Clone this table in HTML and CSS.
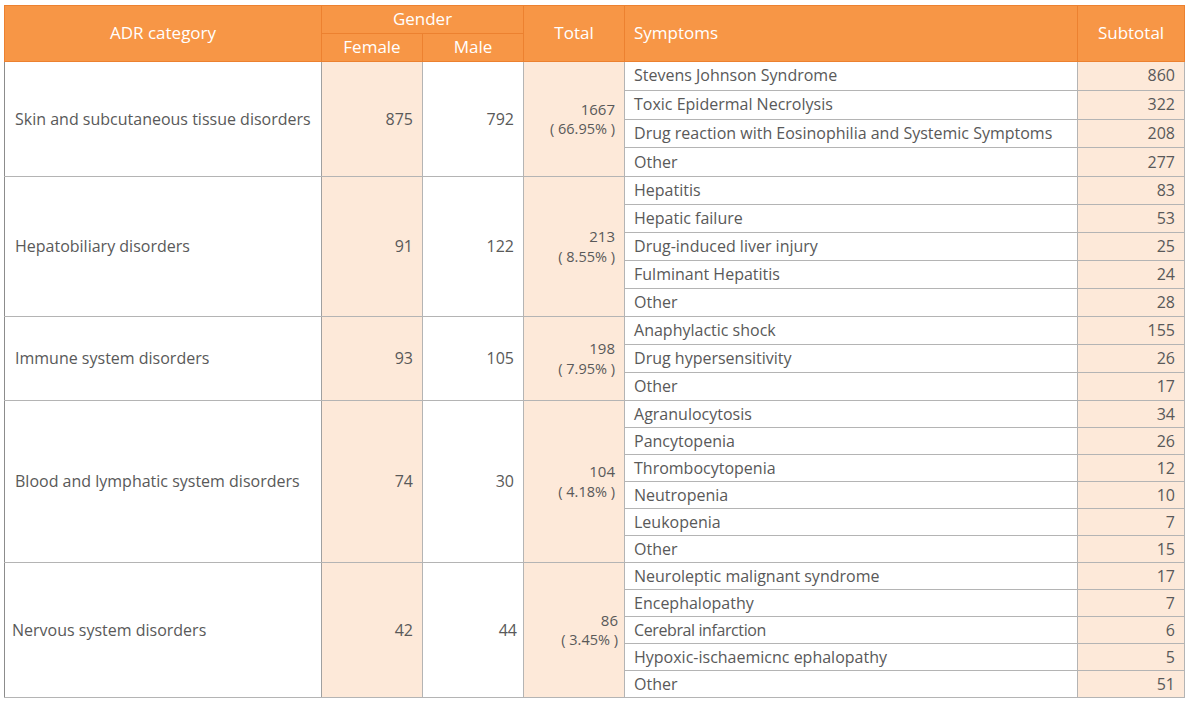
FILE: index.html
```html
<!DOCTYPE html>
<html>
<head>
<meta charset="utf-8">
<link rel="stylesheet" href="styles.css">
</head>
<body>
<table class="adr">
  <colgroup>
    <col class="c-cat"><col class="c-num"><col class="c-num"><col class="c-num"><col class="c-sym"><col class="c-sub">
  </colgroup>
  <thead>
    <tr class="h1">
      <th rowspan="2">ADR category</th>
      <th colspan="2">Gender</th>
      <th rowspan="2">Total</th>
      <th rowspan="2" class="left">Symptoms</th>
      <th rowspan="2">Subtotal</th>
    </tr>
    <tr class="h2">
      <th>Female</th>
      <th>Male</th>
    </tr>
  </thead>
  <tbody class="g g1">
    <tr><td rowspan="4" class="cat">Skin and subcutaneous tissue disorders</td><td rowspan="4" class="num peach">875</td><td rowspan="4" class="num">792</td><td rowspan="4" class="num peach tot"><span class="ln">1667</span><span class="ln">( 66.95% )</span></td><td class="sym">Stevens Johnson Syndrome</td><td class="num peach">860</td></tr>
    <tr><td class="sym">Toxic Epidermal Necrolysis</td><td class="num peach">322</td></tr>
    <tr><td class="sym">Drug reaction with Eosinophilia and Systemic Symptoms</td><td class="num peach">208</td></tr>
    <tr><td class="sym">Other</td><td class="num peach">277</td></tr>
  </tbody>
  <tbody class="g g2">
    <tr><td rowspan="5" class="cat">Hepatobiliary disorders</td><td rowspan="5" class="num peach">91</td><td rowspan="5" class="num">122</td><td rowspan="5" class="num peach tot"><span class="ln">213</span><span class="ln">( 8.55% )</span></td><td class="sym">Hepatitis</td><td class="num peach">83</td></tr>
    <tr><td class="sym">Hepatic failure</td><td class="num peach">53</td></tr>
    <tr><td class="sym">Drug-induced liver injury</td><td class="num peach">25</td></tr>
    <tr><td class="sym">Fulminant Hepatitis</td><td class="num peach">24</td></tr>
    <tr><td class="sym">Other</td><td class="num peach">28</td></tr>
  </tbody>
  <tbody class="g g3">
    <tr><td rowspan="3" class="cat">Immune system disorders</td><td rowspan="3" class="num peach">93</td><td rowspan="3" class="num">105</td><td rowspan="3" class="num peach tot"><span class="ln">198</span><span class="ln">( 7.95% )</span></td><td class="sym">Anaphylactic shock</td><td class="num peach">155</td></tr>
    <tr><td class="sym">Drug hypersensitivity</td><td class="num peach">26</td></tr>
    <tr><td class="sym">Other</td><td class="num peach">17</td></tr>
  </tbody>
  <tbody class="g g4">
    <tr><td rowspan="6" class="cat">Blood and lymphatic system disorders</td><td rowspan="6" class="num peach">74</td><td rowspan="6" class="num">30</td><td rowspan="6" class="num peach tot"><span class="ln">104</span><span class="ln">( 4.18% )</span></td><td class="sym">Agranulocytosis</td><td class="num peach">34</td></tr>
    <tr><td class="sym">Pancytopenia</td><td class="num peach">26</td></tr>
    <tr><td class="sym">Thrombocytopenia</td><td class="num peach">12</td></tr>
    <tr><td class="sym">Neutropenia</td><td class="num peach">10</td></tr>
    <tr><td class="sym">Leukopenia</td><td class="num peach">7</td></tr>
    <tr><td class="sym">Other</td><td class="num peach">15</td></tr>
  </tbody>
  <tbody class="g g5">
    <tr><td rowspan="5" class="cat cat-alt">Nervous system disorders</td><td rowspan="5" class="num peach">42</td><td rowspan="5" class="num num-alt">44</td><td rowspan="5" class="num peach tot tot-alt"><span class="ln">86</span><span class="ln">( 3.45% )</span></td><td class="sym">Neuroleptic malignant syndrome</td><td class="num peach">17</td></tr>
    <tr><td class="sym">Encephalopathy</td><td class="num peach">7</td></tr>
    <tr><td class="sym narrow">Cerebral infarction</td><td class="num peach">6</td></tr>
    <tr><td class="sym">Hypoxic-ischaemicnc ephalopathy</td><td class="num peach">5</td></tr>
    <tr><td class="sym">Other</td><td class="num peach">51</td></tr>
  </tbody>
</table>
</body>
</html>
```

FILE: styles.css
```css
html, body {
  margin: 0;
  padding: 0;
  background: #ffffff;
}
body {
  padding: 5px 0 0 4px;
  font-family: "Open Sans", "Noto Sans", "Liberation Sans", sans-serif;
  color: #595959;
}
.adr {
  border-collapse: collapse;
  table-layout: fixed;
  width: 1181px;
  font-size: 16px;
  border: 1px solid #8c8c8c;
}
.c-cat { width: 317px; }
.c-num { width: 101px; }
.c-sym { width: 453px; }
.c-sub { width: 107px; }

.adr th {
  background: #f79646;
  color: #ffffff;
  font-weight: 400;
  font-size: 17px;
  text-align: center;
  border: 1px solid #ec8130;
  padding: 0 9px;
  line-height: 20px;
}
.adr th.left { text-align: left; }
.h1 th { height: 25px; padding-bottom: 2px; }
.h2 th { height: 25px; padding-bottom: 2px; }
.adr thead { border-bottom: 1px solid #8c8c8c; border-top: 1px solid #c8c8c8; }

.adr td {
  border: 1px solid #b4b4b4;
  padding: 0 9px;
  line-height: 19px;
  vertical-align: middle;
}
.adr tbody.g { border-top: 1px solid #8c8c8c; }
.adr td.cat { text-align: left; padding-left: 10px; border-left: 1px solid #8c8c8c; border-right: 1px solid #a0a0a0; }
.adr td.cat-alt { padding-left: 7px; }
.adr td.num { text-align: right; }
.adr td.num-alt { padding-right: 6px; }
.adr td.peach { background: #fde9d9; }
.adr td.tot .ln { display: block; height: 19.5px; line-height: 19.5px; font-size: 14.5px; }
.adr td.tot .ln:first-child { font-size: 15px; }
.adr td.tot-alt { padding-right: 6px; }
.adr td.sym { text-align: left; padding-left: 9px; }
.adr td.narrow { letter-spacing: -0.4px; }

.g1 tr { height: 28.75px; }
.g2 tr { height: 28px; }
.g3 tr { height: 28px; }
.g4 tr { height: 27px; }
.g5 tr { height: 27px; }
```
